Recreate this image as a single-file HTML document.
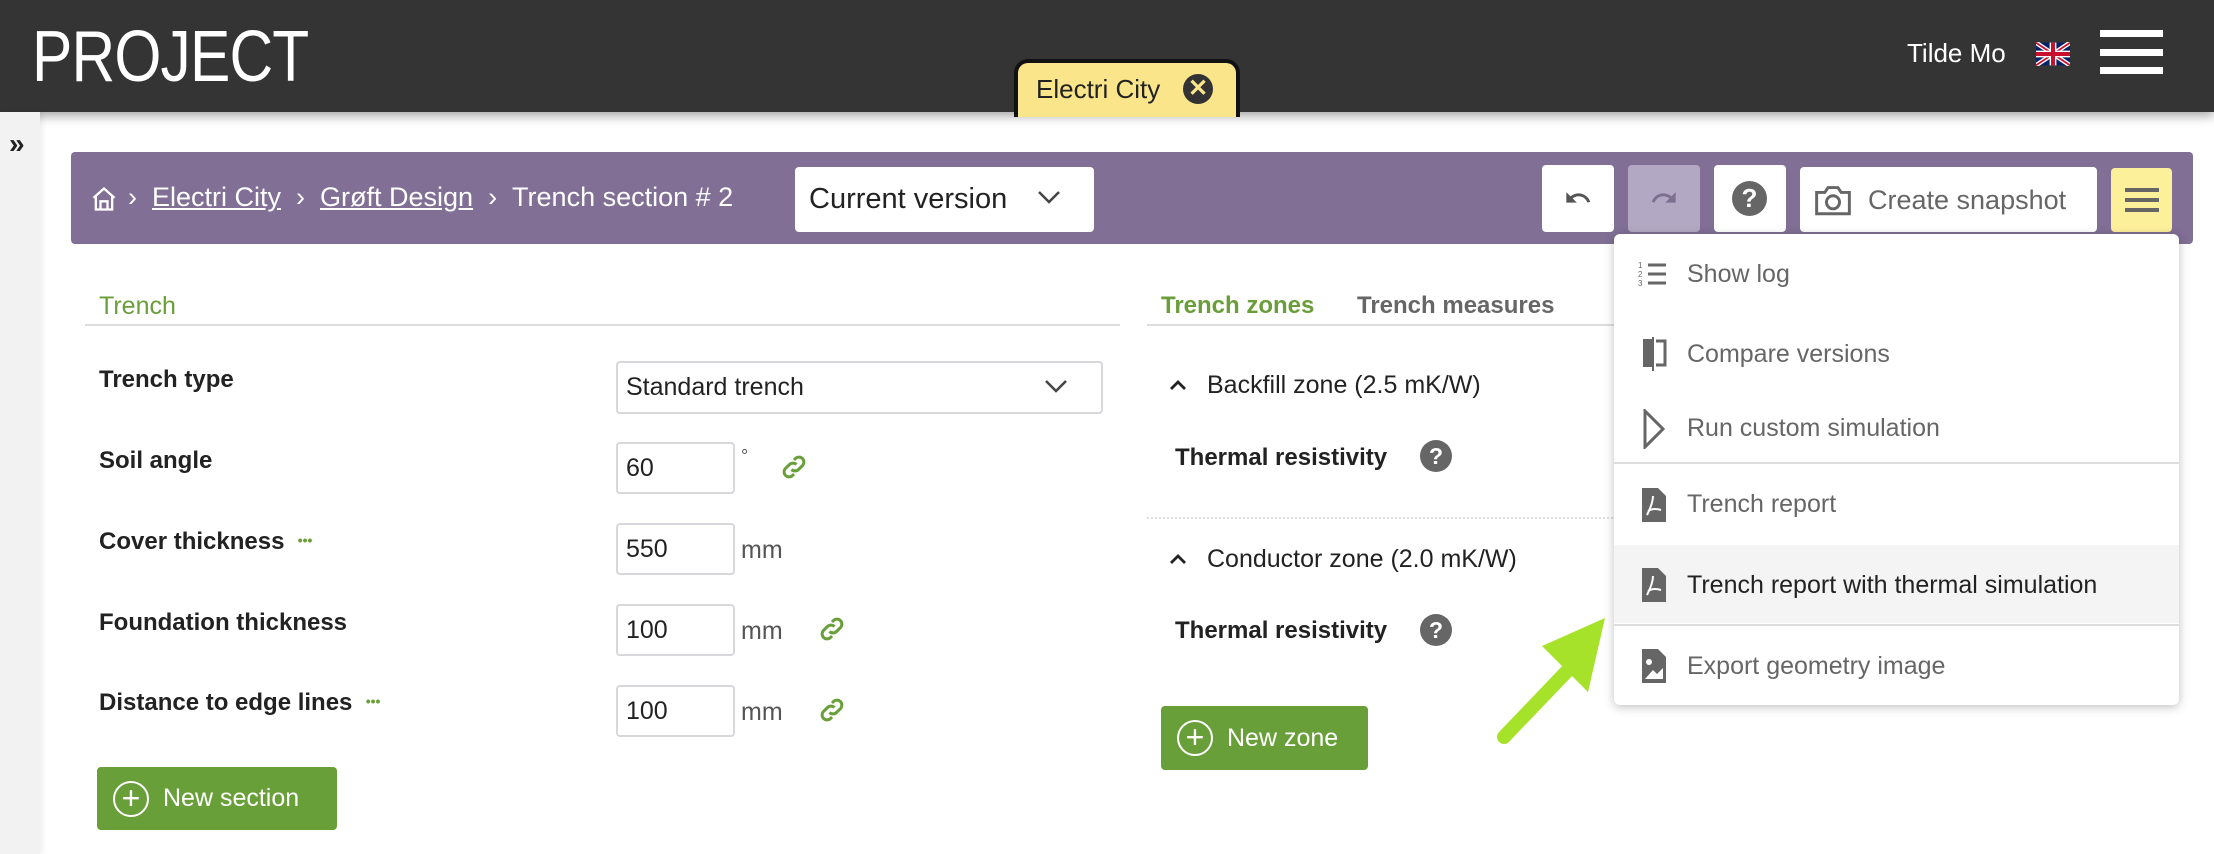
<!DOCTYPE html>
<html><head><meta charset="utf-8"><style>
*{box-sizing:border-box;margin:0;padding:0}
body{width:2214px;height:854px;overflow:hidden;background:#fff;font-family:"Liberation Sans",sans-serif;position:relative;color:#222}
.a{position:absolute}
.hdr{left:0;top:0;width:2214px;height:112px;background:#343434;box-shadow:0 4px 10px rgba(0,0,0,.35)}
.side{left:0;top:112px;width:40px;height:742px;background:#f2f2f2;box-shadow:2px 0 6px rgba(0,0,0,.08)}
.bar{left:71px;top:152px;width:2122px;height:92px;background:#816f95;border-radius:4px}
.btn{background:#fff;border-radius:4px}
.lbl{font-weight:bold;font-size:24px;color:#222}
.inp{border:2px solid #d8d8dc;border-radius:4px;background:#fff;font-size:25px;padding-left:8px;display:flex;align-items:center}
.mm{font-size:25px;color:#555}
.mi{left:1687px;font-size:25px;color:#666}
.gbtn{background:#689f38;border-radius:4px;color:#fff;font-size:25px;display:flex;align-items:center}
</style></head><body>
<div class="a hdr"></div>
<div class="a" style="left:32px;top:16px;font-size:72px;color:#fff;font-weight:300;letter-spacing:-1px;transform:scaleX(.84);transform-origin:left">PROJECT</div>
<div class="a" style="left:1014px;top:59px;width:226px;height:58px;background:#fbe58a;border:4px solid #111;border-bottom:none;border-radius:14px 14px 0 0"></div>
<div class="a" style="left:1036px;top:74px;font-size:26px;color:#222">Electri City</div>
<div class="a" style="left:1183px;top:74px;width:30px;height:30px;border-radius:50%;background:#333;color:#fbe58a;font-size:24px;font-weight:bold;text-align:center;line-height:30px">✕</div>
<div class="a" style="left:1907px;top:38px;font-size:26px;color:#fff">Tilde Mo</div>
<svg class="a" style="left:2036px;top:42px" width="34" height="24" viewBox="0 0 60 40"><rect width="60" height="40" fill="#012169"/><path d="M0 0L60 40M60 0L0 40" stroke="#fff" stroke-width="8"/><path d="M0 0L60 40M60 0L0 40" stroke="#c8102e" stroke-width="3"/><path d="M30 0V40M0 20H60" stroke="#fff" stroke-width="12"/><path d="M30 0V40M0 20H60" stroke="#c8102e" stroke-width="7"/></svg>
<div class="a" style="left:2100px;top:30px;width:63px;height:7px;background:#fff"></div>
<div class="a" style="left:2100px;top:49px;width:63px;height:7px;background:#fff"></div>
<div class="a" style="left:2100px;top:67px;width:63px;height:7px;background:#fff"></div>
<div class="a side"></div>
<div class="a" style="left:9px;top:128px;font-size:28px;color:#222;font-weight:bold">»</div>
<div class="a bar"></div>
<svg class="a" style="left:90px;top:185px" width="28" height="28" viewBox="0 0 24 24" fill="none" stroke="#fff" stroke-width="2"><path d="M3 11L12 3l9 8M5 9v12h14V9M9 21v-7h6v7"/></svg>
<div class="a" style="left:128px;top:182px;font-size:27px;color:#fff;white-space:nowrap">›&nbsp;&nbsp;<u>Electri City</u>&nbsp;&nbsp;›&nbsp;&nbsp;<u>Grøft Design</u>&nbsp;&nbsp;›&nbsp;&nbsp;Trench section # 2</div>
<div class="a btn" style="left:795px;top:167px;width:299px;height:65px;display:flex;align-items:center;padding-left:14px;font-size:29px;color:#222">Current version</div>
<svg class="a" style="left:1036px;top:188px" width="26" height="18" viewBox="0 0 26 18"><path d="M3 4l10 10 10-10" stroke="#444" stroke-width="2.5" fill="none"/></svg>
<div class="a btn" style="left:1542px;top:165px;width:72px;height:67px"></div>
<svg class="a" style="left:1560px;top:184px" width="36" height="28" viewBox="0 0 24 24"><path d="M12.5 8c-2.65 0-5.05 1-6.9 2.6L2 7v9h9l-3.6-3.6c1.4-1.2 3.2-1.9 5.1-1.9 3.5 0 6.5 2.3 7.6 5.5l2.4-.8C21.1 11 17.1 8 12.5 8z" fill="#555"/></svg>
<div class="a" style="left:1628px;top:165px;width:72px;height:67px;background:#b3a8c3;border-radius:4px"></div>
<svg class="a" style="left:1646px;top:184px" width="36" height="28" viewBox="0 0 24 24"><path d="M18.4 10.6C16.550 9 14.15 8 11.5 8c-4.65 0-8.58 3.03-9.96 7.22L3.9 16c1.05-3.19 4.05-5.5 7.6-5.5 1.95 0 3.73.72 5.12 1.88L13 16h9V7l-3.6 3.6z" fill="#7d6f90"/></svg>
<div class="a btn" style="left:1714px;top:165px;width:72px;height:67px"></div>
<div class="a" style="left:1732px;top:181px;width:35px;height:35px;border-radius:50%;background:#666;color:#fff;font-weight:bold;font-size:26px;text-align:center;line-height:35px">?</div>
<div class="a btn" style="left:1800px;top:167px;width:297px;height:65px"></div>
<svg class="a" style="left:1813px;top:181px" width="40" height="36" viewBox="0 0 24 22" fill="none" stroke="#666" stroke-width="1.8"><path d="M2 7h5l2-3h6l2 3h5v13H2z"/><circle cx="12" cy="13" r="4"/></svg>
<div class="a" style="left:1868px;top:185px;font-size:27px;color:#666">Create snapshot</div>
<div class="a" style="left:2111px;top:168px;width:61px;height:64px;background:#fdf09a;border-radius:4px"></div>
<div class="a" style="left:2125px;top:188px;width:34px;height:4px;background:#666"></div>
<div class="a" style="left:2125px;top:198px;width:34px;height:4px;background:#666"></div>
<div class="a" style="left:2125px;top:208px;width:34px;height:4px;background:#666"></div>

<!-- left panel -->
<div class="a" style="left:99px;top:292px;font-size:25px;color:#6a9e3a">Trench</div>
<div class="a" style="left:85px;top:324px;width:1035px;height:2px;background:#ddd"></div>
<div class="a lbl" style="left:99px;top:366px">Trench type</div>
<div class="a lbl" style="left:99px;top:447px">Soil angle</div>
<div class="a lbl" style="left:99px;top:528px">Cover thickness&nbsp;&nbsp;<span style="color:#689f38;font-size:14px;vertical-align:4px">•••</span></div>
<div class="a lbl" style="left:99px;top:609px">Foundation thickness</div>
<div class="a lbl" style="left:99px;top:689px">Distance to edge lines&nbsp;&nbsp;<span style="color:#689f38;font-size:14px;vertical-align:4px">•••</span></div>
<div class="a inp" style="left:616px;top:361px;width:487px;height:53px">Standard trench</div>
<svg class="a" style="left:1043px;top:377px" width="26" height="18" viewBox="0 0 26 18"><path d="M3 4l10 10 10-10" stroke="#444" stroke-width="2.5" fill="none"/></svg>
<div class="a inp" style="left:616px;top:442px;width:119px;height:52px">60</div>
<div class="a mm" style="left:741px;top:446px;font-size:18px">°</div>
<div class="a inp" style="left:616px;top:523px;width:119px;height:52px">550</div>
<div class="a mm" style="left:741px;top:536px">mm</div>
<div class="a inp" style="left:616px;top:604px;width:119px;height:52px">100</div>
<div class="a mm" style="left:741px;top:617px">mm</div>
<div class="a inp" style="left:616px;top:685px;width:119px;height:52px">100</div>
<div class="a mm" style="left:741px;top:698px">mm</div>
<svg class="a" style="left:779px;top:452px" width="30" height="30" viewBox="0 0 24 24" fill="none" stroke="#689f38" stroke-width="2.4"><path d="M10 14a4 4 0 0 0 5.6 0l3.5-3.5a4 4 0 0 0-5.6-5.6L12 6.4M14 10a4 4 0 0 0-5.6 0L4.9 13.5a4 4 0 0 0 5.6 5.6L12 17.6"/></svg>
<svg class="a" style="left:817px;top:614px" width="30" height="30" viewBox="0 0 24 24" fill="none" stroke="#689f38" stroke-width="2.4"><path d="M10 14a4 4 0 0 0 5.6 0l3.5-3.5a4 4 0 0 0-5.6-5.6L12 6.4M14 10a4 4 0 0 0-5.6 0L4.9 13.5a4 4 0 0 0 5.6 5.6L12 17.6"/></svg>
<svg class="a" style="left:817px;top:695px" width="30" height="30" viewBox="0 0 24 24" fill="none" stroke="#689f38" stroke-width="2.4"><path d="M10 14a4 4 0 0 0 5.6 0l3.5-3.5a4 4 0 0 0-5.6-5.6L12 6.4M14 10a4 4 0 0 0-5.6 0L4.9 13.5a4 4 0 0 0 5.6 5.6L12 17.6"/></svg>
<div class="a gbtn" style="left:97px;top:767px;width:240px;height:63px;padding-left:16px"><span style="display:inline-block;width:36px;height:36px;border:2.5px solid #fff;border-radius:50%;text-align:center;line-height:30px;font-size:32px;margin-right:14px">+</span>New section</div>

<!-- right panel -->
<div class="a" style="left:1161px;top:292px;font-size:24px;color:#6a9e3a;font-weight:bold">Trench zones</div>
<div class="a" style="left:1357px;top:292px;font-size:24px;color:#666;font-weight:bold">Trench measures</div>
<div class="a" style="left:1147px;top:324px;width:470px;height:2px;background:#ddd"></div>
<svg class="a" style="left:1168px;top:377px" width="20" height="16" viewBox="0 0 20 16"><path d="M3 12l7-7 7 7" stroke="#222" stroke-width="2.8" fill="none"/></svg>
<div class="a" style="left:1207px;top:371px;font-size:25px">Backfill zone (2.5 mK/W)</div>
<div class="a lbl" style="left:1175px;top:444px">Thermal resistivity</div>
<div class="a" style="left:1420px;top:440px;width:32px;height:32px;border-radius:50%;background:#666;color:#fff;font-weight:bold;font-size:23px;text-align:center;line-height:32px">?</div>
<div class="a" style="left:1147px;top:517px;width:470px;border-top:2px dotted #ddd"></div>
<svg class="a" style="left:1168px;top:551px" width="20" height="16" viewBox="0 0 20 16"><path d="M3 12l7-7 7 7" stroke="#222" stroke-width="2.8" fill="none"/></svg>
<div class="a" style="left:1207px;top:545px;font-size:25px">Conductor zone (2.0 mK/W)</div>
<div class="a lbl" style="left:1175px;top:617px">Thermal resistivity</div>
<div class="a" style="left:1420px;top:614px;width:32px;height:32px;border-radius:50%;background:#666;color:#fff;font-weight:bold;font-size:23px;text-align:center;line-height:32px">?</div>
<div class="a gbtn" style="left:1161px;top:706px;width:207px;height:64px;padding-left:16px"><span style="display:inline-block;width:36px;height:36px;border:2.5px solid #fff;border-radius:50%;text-align:center;line-height:30px;font-size:32px;margin-right:14px">+</span>New zone</div>

<!-- dropdown -->
<div class="a" style="left:1614px;top:234px;width:565px;height:471px;background:#fff;border-radius:6px;box-shadow:0 2px 10px rgba(0,0,0,.25)"></div>
<div class="a" style="left:1614px;top:545px;width:565px;height:78px;background:#f4f4f4"></div>
<div class="a" style="left:1614px;top:462px;width:565px;height:2px;background:#ddd"></div>
<div class="a" style="left:1614px;top:624px;width:565px;height:2px;background:#ddd"></div>
<svg class="a" style="left:1638px;top:260px" width="30" height="28" viewBox="0 0 30 28"><path d="M10 5h18M10 14h18M10 23h18" stroke="#666" stroke-width="3"/><text x="0" y="8" font-size="8" fill="#666" font-family="Liberation Sans">1</text><text x="0" y="17" font-size="8" fill="#666" font-family="Liberation Sans">2</text><text x="0" y="26" font-size="8" fill="#666" font-family="Liberation Sans">3</text></svg>
<div class="a mi" style="top:260px">Show log</div>
<svg class="a" style="left:1640px;top:337px" width="28" height="34" viewBox="0 0 28 34"><path d="M12 2H3v28h9z" fill="#666"/><path d="M16 4h9v24h-9" stroke="#666" stroke-width="3" fill="none"/><path d="M13 0v34" stroke="#666" stroke-width="2"/></svg>
<div class="a mi" style="top:340px">Compare versions</div>
<svg class="a" style="left:1643px;top:409px" width="22" height="40" viewBox="0 0 22 40"><path d="M2 2v36l18-18z" stroke="#666" stroke-width="3" fill="none"/></svg>
<div class="a mi" style="top:414px">Run custom simulation</div>
<svg class="a" style="left:1642px;top:488px" width="24" height="34" viewBox="0 0 24 34"><path d="M0 0h16l8 8v26H0z" fill="#666"/><path d="M5 27c4-8 6-14 6-19M6 23c5-3 10-2 13-1" stroke="#fff" stroke-width="2" fill="none"/></svg>
<div class="a mi" style="top:490px">Trench report</div>
<svg class="a" style="left:1642px;top:568px" width="24" height="34" viewBox="0 0 24 34"><path d="M0 0h16l8 8v26H0z" fill="#666"/><path d="M5 27c4-8 6-14 6-19M6 23c5-3 10-2 13-1" stroke="#fff" stroke-width="2" fill="none"/></svg>
<div class="a mi" style="top:571px;color:#222">Trench report with thermal simulation</div>
<svg class="a" style="left:1642px;top:649px" width="24" height="34" viewBox="0 0 24 34"><path d="M0 0h16l8 8v26H0z" fill="#666"/><circle cx="7" cy="13" r="3" fill="#fff"/><path d="M3 30l8-9 4 4 6-6v11z" fill="#fff"/></svg>
<div class="a mi" style="top:652px">Export geometry image</div>

<!-- arrow -->
<svg class="a" style="left:1490px;top:600px" width="130" height="150" viewBox="0 0 130 150"><path d="M14 137L80 68" stroke="#a6e22a" stroke-width="14" stroke-linecap="round"/><path d="M115 18L52 46L98 92z" fill="#a6e22a"/></svg>
</body></html>
